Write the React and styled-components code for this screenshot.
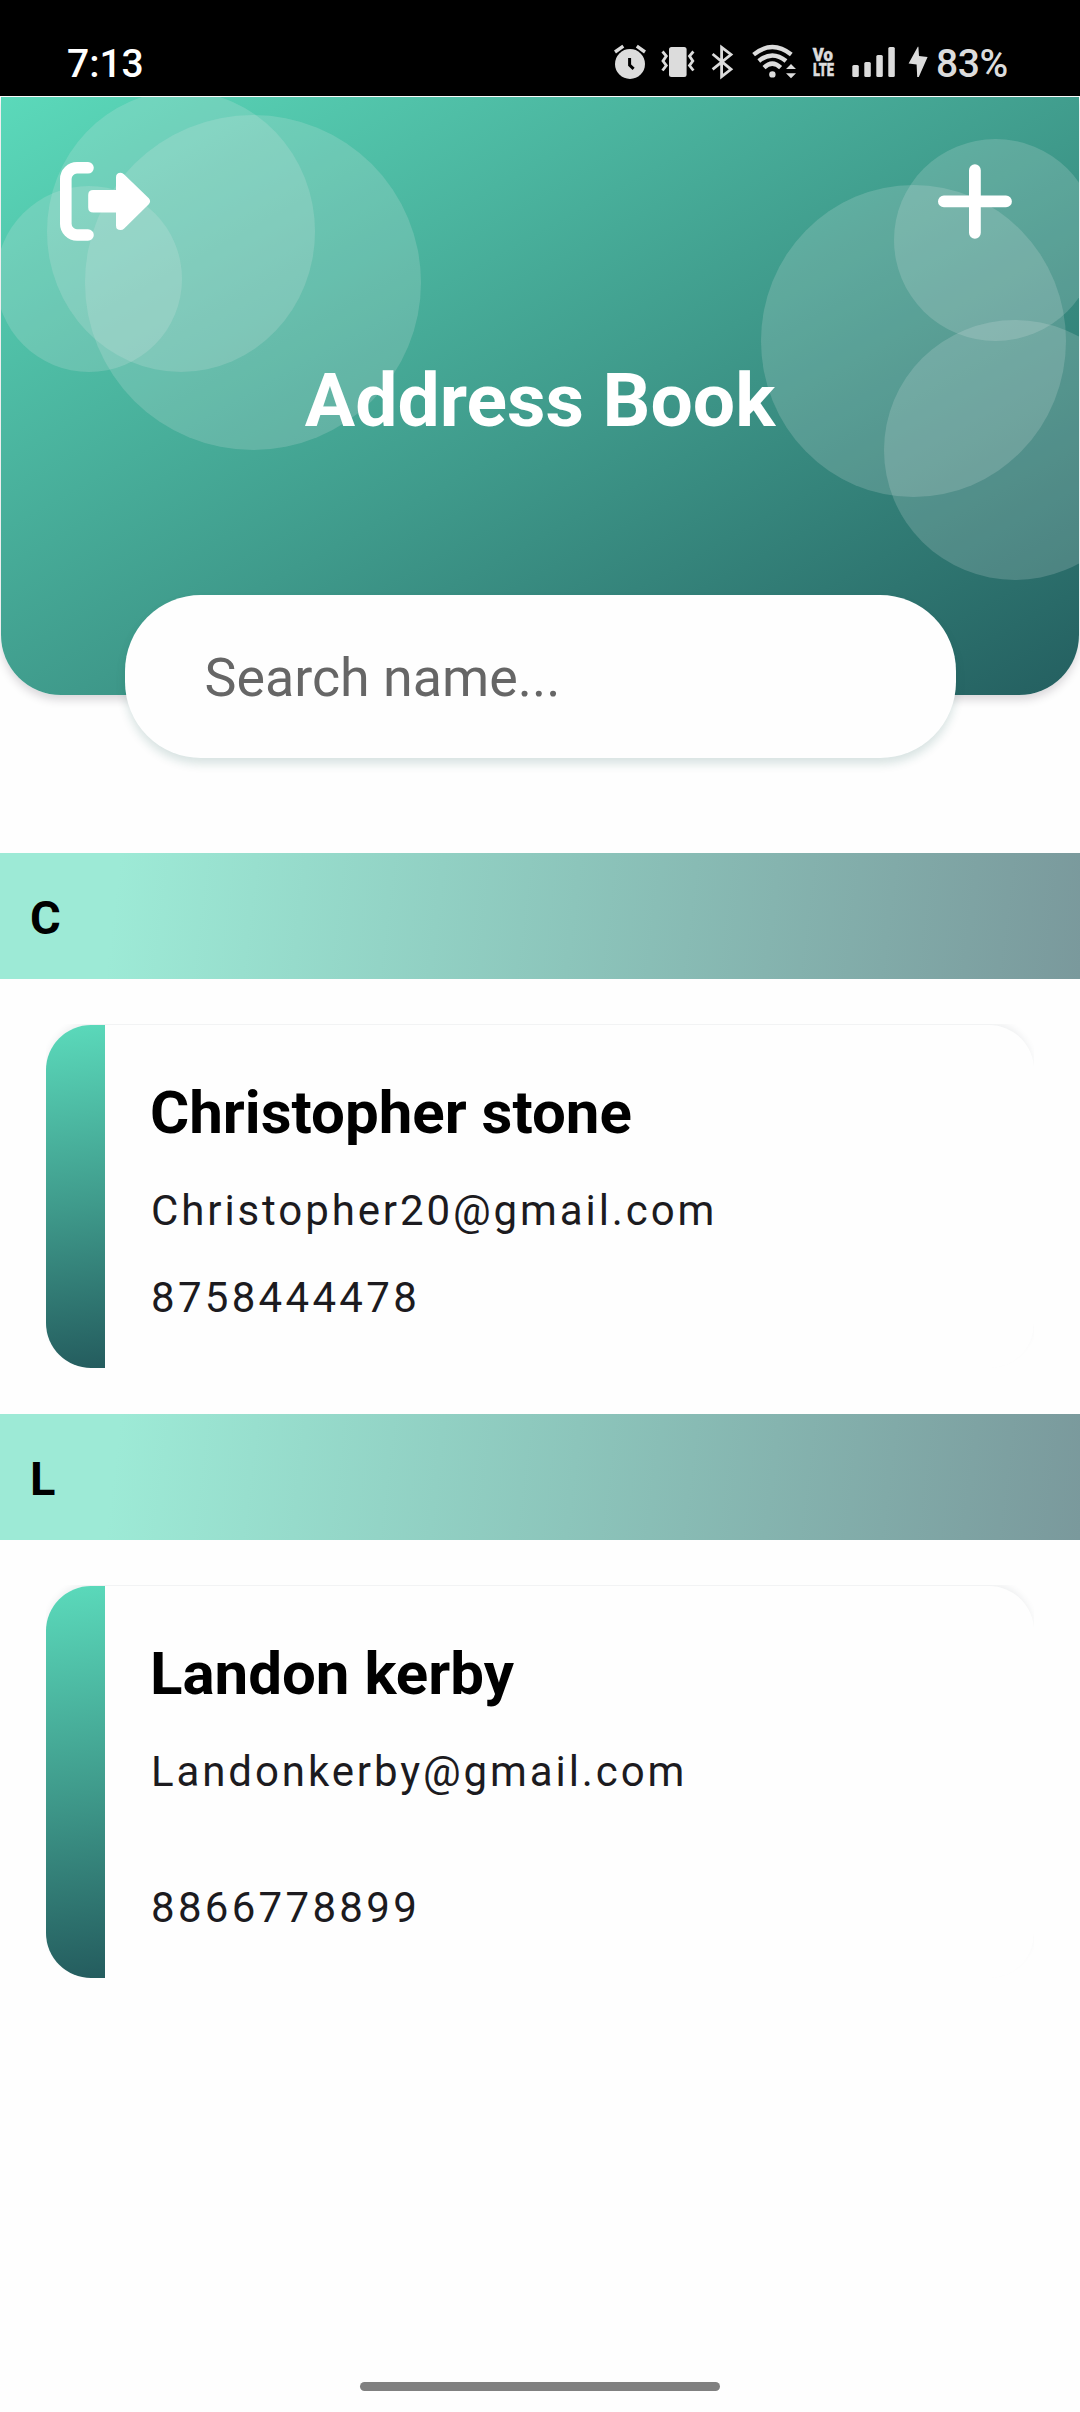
import React from "react";
import styled, { createGlobalStyle } from "styled-components";

const GlobalStyle = createGlobalStyle`
  * { box-sizing: border-box; }
  body { margin: 0; background: #fefefe; font-family: Roboto, "Liberation Sans", sans-serif; }
`;

const Screen = styled.div`
  width: 1080px;
  height: 2412px;
  display: flex;
  flex-direction: column;
  overflow: hidden;
  background: #fefefe;
`;

const StatusBar = styled.div`
  height: 96px;
  flex: none;
  padding: 31px 72px 0 67px;
  display: flex;
  justify-content: space-between;
  align-items: flex-start;
  background: #000;
`;

const Clock = styled.span`
  color: #fff;
  font-size: 39px;
  font-weight: 500;
  line-height: 66px;
`;

const StatusIcons = styled.div`
  display: flex;
  height: 65px;
  color: #dcdcdc;
`;

const Battery = styled.span`
  width: 72px;
  font-size: 39px;
  font-weight: 500;
  letter-spacing: -0.4px;
  line-height: 66px;
  white-space: nowrap;
`;

const Header = styled.header`
  position: relative;
  height: 598px;
  flex: none;
  margin: 1px 1px 0;
  border-radius: 0 0 60px 60px;
  background: linear-gradient(to bottom right, #5bd9ba 0%, #3f9a8b 53%, #245f60 100%);
  box-shadow: 0 5px 9px rgba(40, 30, 50, 0.17);
`;

const Bubbles = styled.div`
  position: absolute;
  inset: 0;
  overflow: hidden;
  border-radius: inherit;
`;

const Bubble = styled.span`
  position: absolute;
  left: ${(p) => p.$x}px;
  top: ${(p) => p.$y}px;
  width: ${(p) => p.$w}px;
  height: ${(p) => p.$h}px;
  border-radius: 50%;
  background: rgba(228, 236, 232, 0.19);
`;

const HeaderContent = styled.div`
  position: relative;
  display: flex;
  flex-direction: column;
  align-items: center;
  padding-top: 61px;
`;

const Actions = styled.div`
  width: 100%;
  display: flex;
  justify-content: space-between;
  padding: 0 63px 0 55px;
`;

const IconButton = styled.button`
  display: flex;
  padding: 0;
  border: 0;
  background: none;
  color: #fff;
`;

const Title = styled.h1`
  margin: 111px 0 0;
  color: #fff;
  font-size: 75px;
  font-weight: 700;
  line-height: 90px;
`;

const SearchInput = styled.input`
  width: 831px;
  height: 163px;
  margin-top: 150px;
  padding: 2px 80px 0 80px;
  border: 0;
  outline: 0;
  border-radius: 76px;
  background: #fefefe;
  box-shadow: 0 6px 10px rgba(20, 90, 80, 0.16);
  font-family: inherit;
  font-size: 53.8px;
  color: #1c1c1c;
  &::placeholder { color: #666; opacity: 1; }
`;

const List = styled.main`
  display: flex;
  flex-direction: column;
  margin-top: 158px;
`;

const SectionHeader = styled.h2`
  margin: 0;
  height: 126px;
  padding: 2px 0 0 30px;
  background: linear-gradient(97deg, #9dead6 0%, #9dead6 11%, #8cc5bb 53%, #7a999c 100%);
  color: #000;
  font-size: 47px;
  font-weight: 700;
  line-height: 126px;
`;

const CardFrame = styled.div`
  margin: 45px 46px 46px;
  padding-top: 1px;
  overflow: hidden;
`;

const Card = styled.article`
  display: flex;
  height: ${(p) => p.$height}px;
  border-radius: 45px;
  background: #fefefe;
  box-shadow: 0 -4px 6px -1px rgba(60, 80, 90, 0.08);
`;

const Accent = styled.div`
  width: 59px;
  flex: none;
  border-radius: 45px 0 0 45px;
  background: linear-gradient(173deg, #5bdabb 0%, #3f9a8b 53%, #245c5e 100%);
`;

const Details = styled.div`
  display: flex;
  flex-direction: column;
  padding: 52px 0 0 46px;
`;

const Name = styled.h3`
  margin: 0 0 37px -1px;
  color: #000;
  font-size: 60px;
  font-weight: 700;
  line-height: 72px;
`;

const Line = styled.p`
  margin: 0 0 38px;
  color: #1c1b1f;
  font-size: 42px;
  letter-spacing: ${(p) => p.$tracking}px;
  line-height: 49px;
  min-height: ${(p) => p.$rows * 49}px;
`;

const HomeIndicator = styled.div`
  width: 360px;
  height: 9px;
  margin: auto auto 21px;
  border-radius: 5px;
  background: #808080;
`;

const Glyph = ({ x, w, children }) => (
  <svg width={w} height="65" viewBox={`${x} 31 ${w} 65`} fill="currentColor" aria-hidden="true">
    {children}
  </svg>
);

const line = { fill: "none", stroke: "currentColor" };

const StatusGlyphs = () => (
  <>
    <Glyph x={612} w={44}>
      <circle cx="630" cy="64" r="15" />
      <path d="M615 52 L623.3 46.2 M636.8 46.2 L645 52" {...line} strokeWidth="3.4" />
      <path d="M629.6 58 V65 L633.6 68.8" fill="none" stroke="#000" strokeWidth="3" />
    </Glyph>
    <Glyph x={656} w={50}>
      <rect x="669" y="47" width="17.6" height="30" rx="2.5" />
      <path
        d="M662.5 51.5 L666.3 56 L663 61 L666.3 65.5 L662.5 70.5 M693.4 51.5 L689.5 56 L692.8 61 L689.5 65.5 L693.4 70.5"
        {...line}
        strokeWidth="2.8"
      />
    </Glyph>
    <Glyph x={706} w={40}>
      <path d="M712.6 54 L731 69.3 L721.6 76.6 V47.4 L731 54.5 L712.6 69.3" {...line} strokeWidth="2.8" />
    </Glyph>
    <Glyph x={746} w={60}>
      <path
        d="M753.6 54.6 Q772.3 39.6 791.3 54.6 M758.8 61 Q772.3 49.8 786 61 M764 67.6 Q772.3 59.6 780.6 67.6"
        {...line}
        strokeWidth="4.4"
      />
      <circle cx="772.4" cy="74.4" r="3.2" />
      <path d="M786 69 L791 64 L796 69 Z M786 73.2 L791 78.2 L796 73.2 Z" />
    </Glyph>
    <Glyph x={806} w={40}>
      <g stroke="currentColor" strokeWidth="0.5" fontSize="19" fontWeight="900">
        <text transform="translate(812.8 60.6) scale(0.88 1)">Vo</text>
        <text transform="translate(813 76.4) scale(0.68 1)">LTE</text>
      </g>
    </Glyph>
    <Glyph x={846} w={56}>
      <rect x="852.3" y="65" width="6.5" height="12" rx="1.5" />
      <rect x="864.3" y="62" width="6.5" height="15" rx="1.5" />
      <rect x="876.3" y="55" width="6.5" height="22" rx="1.5" />
      <rect x="888.3" y="47" width="6.5" height="30" rx="1.5" />
    </Glyph>
    <Glyph x={902} w={34}>
      <path d="M917.8 46.7 L908.6 63.4 L916.6 64.4 L917.2 77 H918.8 L927.6 57 L919 56 L918.4 46.7 Z" />
    </Glyph>
  </>
);

const LogoutIcon = () => (
  <svg width="100" height="86" viewBox="56 158 100 86" fill="currentColor" aria-hidden="true">
    <path
      d="M88 167.8 H77 a11.2 11.2 0 0 0 -11.2 11.2 V223.8 a11.2 11.2 0 0 0 11.2 11.2 H88"
      fill="none"
      stroke="currentColor"
      strokeWidth="11.6"
      strokeLinecap="round"
    />
    <path d="M88.2 195 q0 -5 5 -5 H116 V177.4 q0 -4.6 4.6 -4.6 q2 0 3.6 1.6 L148.8 198.3 q2.6 3 0 6 L124.2 228.4 q-1.6 1.6 -3.6 1.6 q-4.6 0 -4.6 -4.6 V212.6 H93.2 q-5 0 -5 -5 Z" />
  </svg>
);

const PlusIcon = () => (
  <svg width="82" height="86" viewBox="934 158 82 86" aria-hidden="true">
    <path
      d="M943.9 201.4 H1006 M974.9 170.2 V232.8"
      fill="none"
      stroke="currentColor"
      strokeWidth="11.8"
      strokeLinecap="round"
    />
  </svg>
);

const bubbles = [
  [46, -6, 268, 281],
  [84, 18, 336, 335],
  [-5, 89, 186, 186],
  [760, 88, 305, 312],
  [893, 42, 203, 202],
  [883, 223, 262, 260],
];

const contacts = [
  { letter: "C", name: "Christopher stone", email: "Christopher20@gmail.com", emailRows: 1, phone: "8758444478", height: 343 },
  { letter: "L", name: "Landon kerby", email: "Landonkerby@gmail.com", emailRows: 2, phone: "8866778899", height: 392 },
];

export default function App() {
  return (
    <Screen>
      <GlobalStyle />
      <StatusBar>
        <Clock>7:13</Clock>
        <StatusIcons>
          <StatusGlyphs />
          <Battery>83%</Battery>
        </StatusIcons>
      </StatusBar>
      <Header>
        <Bubbles>
          {bubbles.map(([x, y, w, h]) => (
            <Bubble key={`${x}-${y}`} $x={x} $y={y} $w={w} $h={h} />
          ))}
        </Bubbles>
        <HeaderContent>
          <Actions>
            <IconButton aria-label="Log out"><LogoutIcon /></IconButton>
            <IconButton aria-label="Add contact"><PlusIcon /></IconButton>
          </Actions>
          <Title>Address Book</Title>
          <SearchInput placeholder="Search name..." />
        </HeaderContent>
      </Header>
      <List>
        {contacts.map((c) => (
          <section key={c.letter}>
            <SectionHeader>{c.letter}</SectionHeader>
            <CardFrame>
              <Card $height={c.height}>
                <Accent />
                <Details>
                  <Name>{c.name}</Name>
                  <Line $rows={c.emailRows} $tracking={2.9}>{c.email}</Line>
                  <Line $rows={1} $tracking={3.3}>{c.phone}</Line>
                </Details>
              </Card>
            </CardFrame>
          </section>
        ))}
      </List>
      <HomeIndicator />
    </Screen>
  );
}
